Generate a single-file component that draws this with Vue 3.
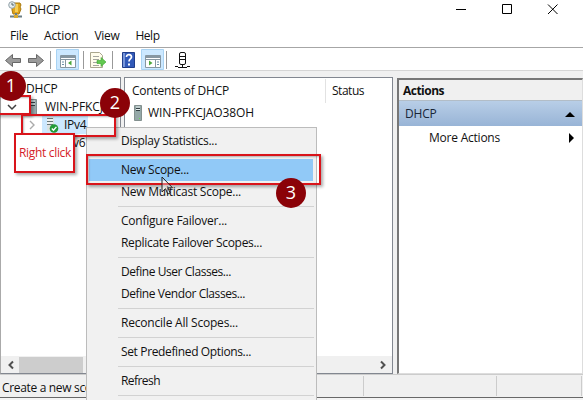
<script setup>
const menus = ['File', 'Action', 'View', 'Help']
const groups = [
  [{ t: 'Display Statistics...', w: 96 }],
  [{ t: 'New Scope...', w: 68, on: true }, { t: 'New Multicast Scope...', w: 120 }],
  [{ t: 'Configure Failover...', w: 106 }, { t: 'Replicate Failover Scopes...', w: 141 }],
  [{ t: 'Define User Classes...', w: 110 }, { t: 'Define Vendor Classes...', w: 124 }],
  [{ t: 'Reconcile All Scopes...', w: 117 }],
  [{ t: 'Set Predefined Options...', w: 130 }],
  [{ t: 'Refresh', w: 39 }],
  []
]
// Condenses each label to its intended width once its natural width is known.
const vFit = {
  mounted(el, { value }) {
    const n = el.textContent.length
    el.style.letterSpacing = `${(value - el.getBoundingClientRect().width) / n}px`
  }
}
</script>

<template>
  <div class="window">
    <header class="titlebar">
      <svg class="app-icon" width="16" height="18" viewBox="0 0 16 18">
        <path d="M4 2h8l1 2-1 2 1 2-2 5H5L4 9z" fill="#e0a51c" stroke="#a8780d" />
        <path d="M7 3h3v8H7z" fill="#f6ce55" />
        <circle cx="4" cy="4" r="3.3" fill="#e5edf0" stroke="#93a1a8" />
        <path d="M4 2v2h2" fill="none" stroke="#566" />
        <path d="M8 12v3M2 15.5h12" stroke="#6b7f86" stroke-width="2" />
        <path d="M6 14h4v3H6z" fill="#d8aa30" />
      </svg>
      <span v-fit="31" class="title">DHCP</span>
      <svg class="controls" width="110" height="12" viewBox="0 0 110 12" fill="none" stroke="#000">
        <path d="M3 6.5h10" /><path d="M49.5 1.5h9v9h-9z" /><path d="M95 1.5l9.5 9.5M104.500 1.500L95 11" />
      </svg>
    </header>
    <nav class="menubar"><span v-for="(m, i) in menus" :key="m" v-fit="[18, 34.500, 25, 24][i]">{{ m }}</span></nav>
    <div class="toolbar">
      <svg width="200" height="22" viewBox="0 0 200 22">
        <g fill="#9a9a9a" stroke="#686868" stroke-linejoin="round">
          <path d="M5.500 12.500l7-6v4h8v4h-8v4z" transform="translate(0 0)" /><path d="M43.500 12.500l-7-6v4h-8v4h8v4z" />
        </g>
        <path d="M50.500 3v18M83.500 3v18M112.500 3v18M166.500 3v18" stroke="#999" />
        <g fill="#cce8ff" stroke="#a9d3f3"><path d="M56.500 1.500h22v20h-22zM141.500 1.500h22v20h-22z" /></g>
        <g fill="#fff" stroke="#8797a2"><path d="M60.500 7.500h15v12h-15zM145.500 7.500h15v12h-15z" /></g>
        <path d="M61 9h14M146 9h14" stroke="#8797a2" stroke-width="2" />
        <path d="M61 11.500h14M146 11.500h14M65.500 12v7M155.500 12v7" stroke="#8797a2" />
        <path d="M62 14h2M62 16.500h2M157 14h2M157 16.500h2" stroke="#6b8faa" />
        <path d="M71.500 12.500v5l-3.500-2.500zM149 12.500v5l3.500-2.500z" fill="#4da83d" />
        <path d="M90.500 4.500h9l3 3v12h-12z" fill="#fffdec" stroke="#aaa78f" />
        <path d="M93 8.500h6M93 11.500h6M93 14.500h4M93 17.500h6" stroke="#a4a59f" />
        <path d="M97 12.500h4v-3l5 4.500-5 4.500v-3h-4z" fill="#63c951" stroke="#38a32b" stroke-width=".6" />
        <path d="M122.500 4.500h12v15h-12z" fill="#3159b8" stroke="#203d8a" />
        <path d="M123 5h2v14h-2z" fill="#7896d8" />
        <path d="M126.500 9c0-3.500 5-3 5 0 0 2-2.500 2-2.500 4.500" fill="none" stroke="#fff" stroke-width="1.700" />
        <path d="M128 15.500h2v2h-2z" fill="#fff" />
        <g fill="none" stroke="#111"><rect x="179.500" y="4.500" width="6" height="12" rx="1.500" /><path d="M180 8.500h5M180 11.500h5M182.500 17v2M175 18.500h3M187 18.500h3M178 19.500h9" /></g>
      </svg>
    </div>

    <main class="panes">
      <section class="pane tree">
        <div class="node root"><span v-fit="31.500">DHCP</span></div>
        <div class="node server">
          <svg class="chevron" width="10" height="8" viewBox="0 0 10 8"><path d="M1 2l4 4 4-4" fill="none" stroke="#404040" stroke-width="1.500" /></svg>
          <svg width="8" height="16" viewBox="0 0 8 16"><path d="M.5.5h7v15h-7z" fill="#9aabad" stroke="#809092" /><path d="M2 3.500h4M2 6.500h4" stroke="#344044" /><path d="M2 2h4M2 5h4" stroke="#e8f0f0" /></svg>
          <span v-fit="106">WIN-PFKCJAO38OH</span>
        </div>
        <div class="node ipv4">
          <svg class="chevron" width="8" height="10" viewBox="0 0 8 10"><path d="M2 1l4 4-4 4" fill="none" stroke="#aaa" stroke-width="1.400" /></svg>
          <div class="selected">
            <svg width="14" height="18" viewBox="0 0 14 18"><path d="M2 1h7v14H2z" fill="#dce2e2" /><path d="M2 2.500h6M2 5.500h6M2 8.500h6" stroke="#677779" /><path d="M2 4h6M2 7h6" stroke="#fff" /><circle cx="9" cy="12.500" r="4.300" fill="#239b38" /><path d="M6.800 12.500l1.700 1.700 2.900-3.300" fill="none" stroke="#fff" stroke-width="1.400" /></svg>
            <span v-fit="22.500">IPv4</span>
          </div>
        </div>
        <div class="node ipv6"><span v-fit="22.500">IPv6</span></div>
        <div class="scroll">
          <svg width="18" height="16" viewBox="0 0 18 16"><path d="M12 4.500L8.500 8l3.500 3.500" fill="none" stroke="#505050" stroke-width="2" /></svg>
          <i class="thumb"></i>
        </div>
      </section>
      <section class="pane contents">
        <div class="columns"><span class="c1"><b v-fit="97">Contents of DHCP</b></span><span class="c2"><b v-fit="32">Status</b></span></div>
        <div class="entry">
          <svg width="8" height="16" viewBox="0 0 8 16"><path d="M.5.5h7v15h-7z" fill="#94a8a8" stroke="#83908f" /><path d="M2 3.500h4M2 5.500h4" stroke="#344044" /><path d="M2 2h4M2 4.500h4" stroke="#e8f0f0" /><path d="M5 13h1v1H5z" fill="#6d5" /></svg>
          <span v-fit="106">WIN-PFKCJAO38OH</span>
        </div>
        <div class="scroll end"><svg width="18" height="16" viewBox="0 0 18 16"><path d="M7 4.500l3.500 3.500L7 11.500" fill="none" stroke="#505050" stroke-width="2" /></svg></div>
      </section>
      <section class="actions">
        <h2><span v-fit="41">Actions</span></h2>
        <div class="group"><span v-fit="31.500">DHCP</span><svg width="10" height="6" viewBox="0 0 10 6"><path d="M0 6l5-5 5 5z" /></svg></div>
        <div class="more"><span v-fit="71">More Actions</span><svg width="6" height="10" viewBox="0 0 6 10"><path d="M0 0l5 5-5 5z" /></svg></div>
      </section>
    </main>

    <footer class="status"><span class="s1"><b v-fit="106">Create a new scope.</b></span><span class="s2"></span><span class="s3"></span></footer>
    <div class="underline"></div>

    <div class="context">
      <div v-for="(g, i) in groups" :key="i" class="section">
        <div v-for="it in g" :key="it.t" class="item" :class="{ on: it.on }"><span v-fit="it.w">{{ it.t }}</span></div>
      </div>
    </div>

    <div class="mark m-server"></div>
    <div class="mark m-ipv4"></div>
    <div class="mark m-scope"></div>
    <div class="mark note"><span v-fit="52">Right click</span></div>
    <div class="badge b1">1</div>
    <div class="badge b2">2</div>
    <div class="badge b3">3</div>
    <svg class="cursor" width="13" height="20" viewBox="0 0 13 20"><path d="M1 1v15l3.500-3.300 2.300 5.300 2.400-1-2.300-5.200H11.500z" fill="#fff" fill-opacity=".35" stroke="#222" /></svg>
  </div>
</template>

<style>
body { margin: 0; overflow: hidden; }
</style>

<style scoped>
* { box-sizing: border-box; }
.window { position: relative; width: 583px; height: 400px; overflow: hidden; display: flex; flex-direction: column; background: #fff; color: #111; font: 12px/18px "Open Sans", "Noto Sans", sans-serif; }
span, b { white-space: nowrap; font-weight: 400; }
svg { display: block; flex: none; }
.titlebar { height: 20px; display: flex; align-items: center; padding-left: 8px; }
.title { margin-left: 5px; }
.controls { margin-left: auto; margin-right: 20px; margin-top: -2px; }
.menubar { height: 28px; display: flex; align-items: center; gap: 16px; padding: 4px 0 0 10px; border-bottom: 1px solid #a6a6a6; }
.toolbar { height: 23px; border-bottom: 1px solid #d5d5d5; }
.panes { height: 303px; background: #f0f0f0; display: flex; padding-top: 6px; }
.pane { height: 297px; background: #fff; border: 1px solid #828790; display: flex; flex-direction: column; overflow: hidden; }
.tree { width: 121px; padding-top: 2px; border-left-color: #aaa; }
.node { height: 18px; flex: none; display: flex; align-items: center; }
.root { padding-left: 25px; }
.server { padding-left: 6px; }
.server .chevron { margin-right: 12px; }
.server span { margin-left: 8px; }
.ipv4 { padding-left: 27px; }
.selected { height: 18px; width: 46px; margin-left: 6px; padding-left: 3px; display: flex; align-items: center; background: #cce8ff; }
.selected span { margin-left: 5px; }
.ipv6 { padding-left: 62px; }
.scroll { height: 17px; margin-top: auto; background: #f0f0f0; display: flex; align-items: center; flex: none; }
.thumb { width: 64px; height: 16px; background: #cdcdcd; }
.contents { width: 269px; margin-left: 3px; padding-top: 1px; }
.columns { height: 24px; display: flex; line-height: 24px; }
.c1 { width: 201px; padding-left: 7px; border-right: 1px solid #e2e2e2; }
.c2 { padding-left: 6px; }
.entry { height: 20px; display: flex; align-items: center; padding-left: 9px; }
.entry span { margin-left: 6px; }
.end { justify-content: flex-end; }
.actions { width: 186px; height: 296px; margin: 1px 0 0 4px; background: #fff; border: solid #777; border-width: 2px 1px 1px 2px; border-right-color: #ddd; border-bottom-color: #ddd; }
h2 { height: 21px; margin: 0; padding-left: 4px; font-size: 12px; line-height: 21px; font-weight: 700; background: #f0f0f0; border-bottom: 1px solid #b2bdc7; }
h2 span { font-weight: 700; }
.group { height: 25px; display: flex; align-items: center; justify-content: space-between; padding: 0 7px 0 6px; color: #192638; background: linear-gradient(#b8cee7, #98b4d6); }
.more { height: 24px; display: flex; align-items: center; justify-content: space-between; padding: 0 7px 0 30px; }
.status { height: 23px; background: #f0f0f0; border-top: 1px solid #ccc; display: flex; padding: 1px 1px 1px 0; }
.status > span { border-right: 1px solid #ccc; line-height: 23px; }
.s1 { width: 364px; padding-left: 2px; }
.s2 { width: 133px; }
.s3 { width: 85px; }
.underline { height: 3px; background: #f4f4f4; border-top: 1px solid #686868; }
.context { position: absolute; left: 86px; top: 127px; width: 231px; height: 280px; padding: 2px; background: #f1f1f1; border: 1px solid #bcbcbc; }
.section + .section { padding-top: 7px; background: linear-gradient(#d2d2d2, #d2d2d2) 29px 3px / 196px 1px no-repeat; }
.item { height: 22px; padding-left: 32px; line-height: 22px; }
.item.on { background: #91c9f7; margin-right: 1px; }
.mark { position: absolute; border: 2px solid #d9141b; box-shadow: 2px 2px 3px #0005, inset 1px 1px 2px #0004; }
.m-server { left: -3px; top: 95px; width: 34px; height: 20px; }
.m-ipv4 { left: 21px; top: 114px; width: 95px; height: 23px; }
.m-scope { left: 86px; top: 154px; width: 235px; height: 31px; }
.note { left: 14px; top: 133px; width: 61px; height: 40px; padding-left: 3px; background: #fff; color: #d51d2a; font-size: 12px; line-height: 36px; box-shadow: 2px 2px 3px #0005; }
.badge { position: absolute; width: 30px; height: 30px; border-radius: 50%; background: #8b0208; color: #fff; text-align: center; font-size: 18px; line-height: 29px; }
.b1 { left: -4px; top: 71px; }
.b2 { left: 100px; top: 88px; }
.b3 { left: 276px; top: 178px; }
.cursor { position: absolute; left: 161px; top: 176px; }
</style>
